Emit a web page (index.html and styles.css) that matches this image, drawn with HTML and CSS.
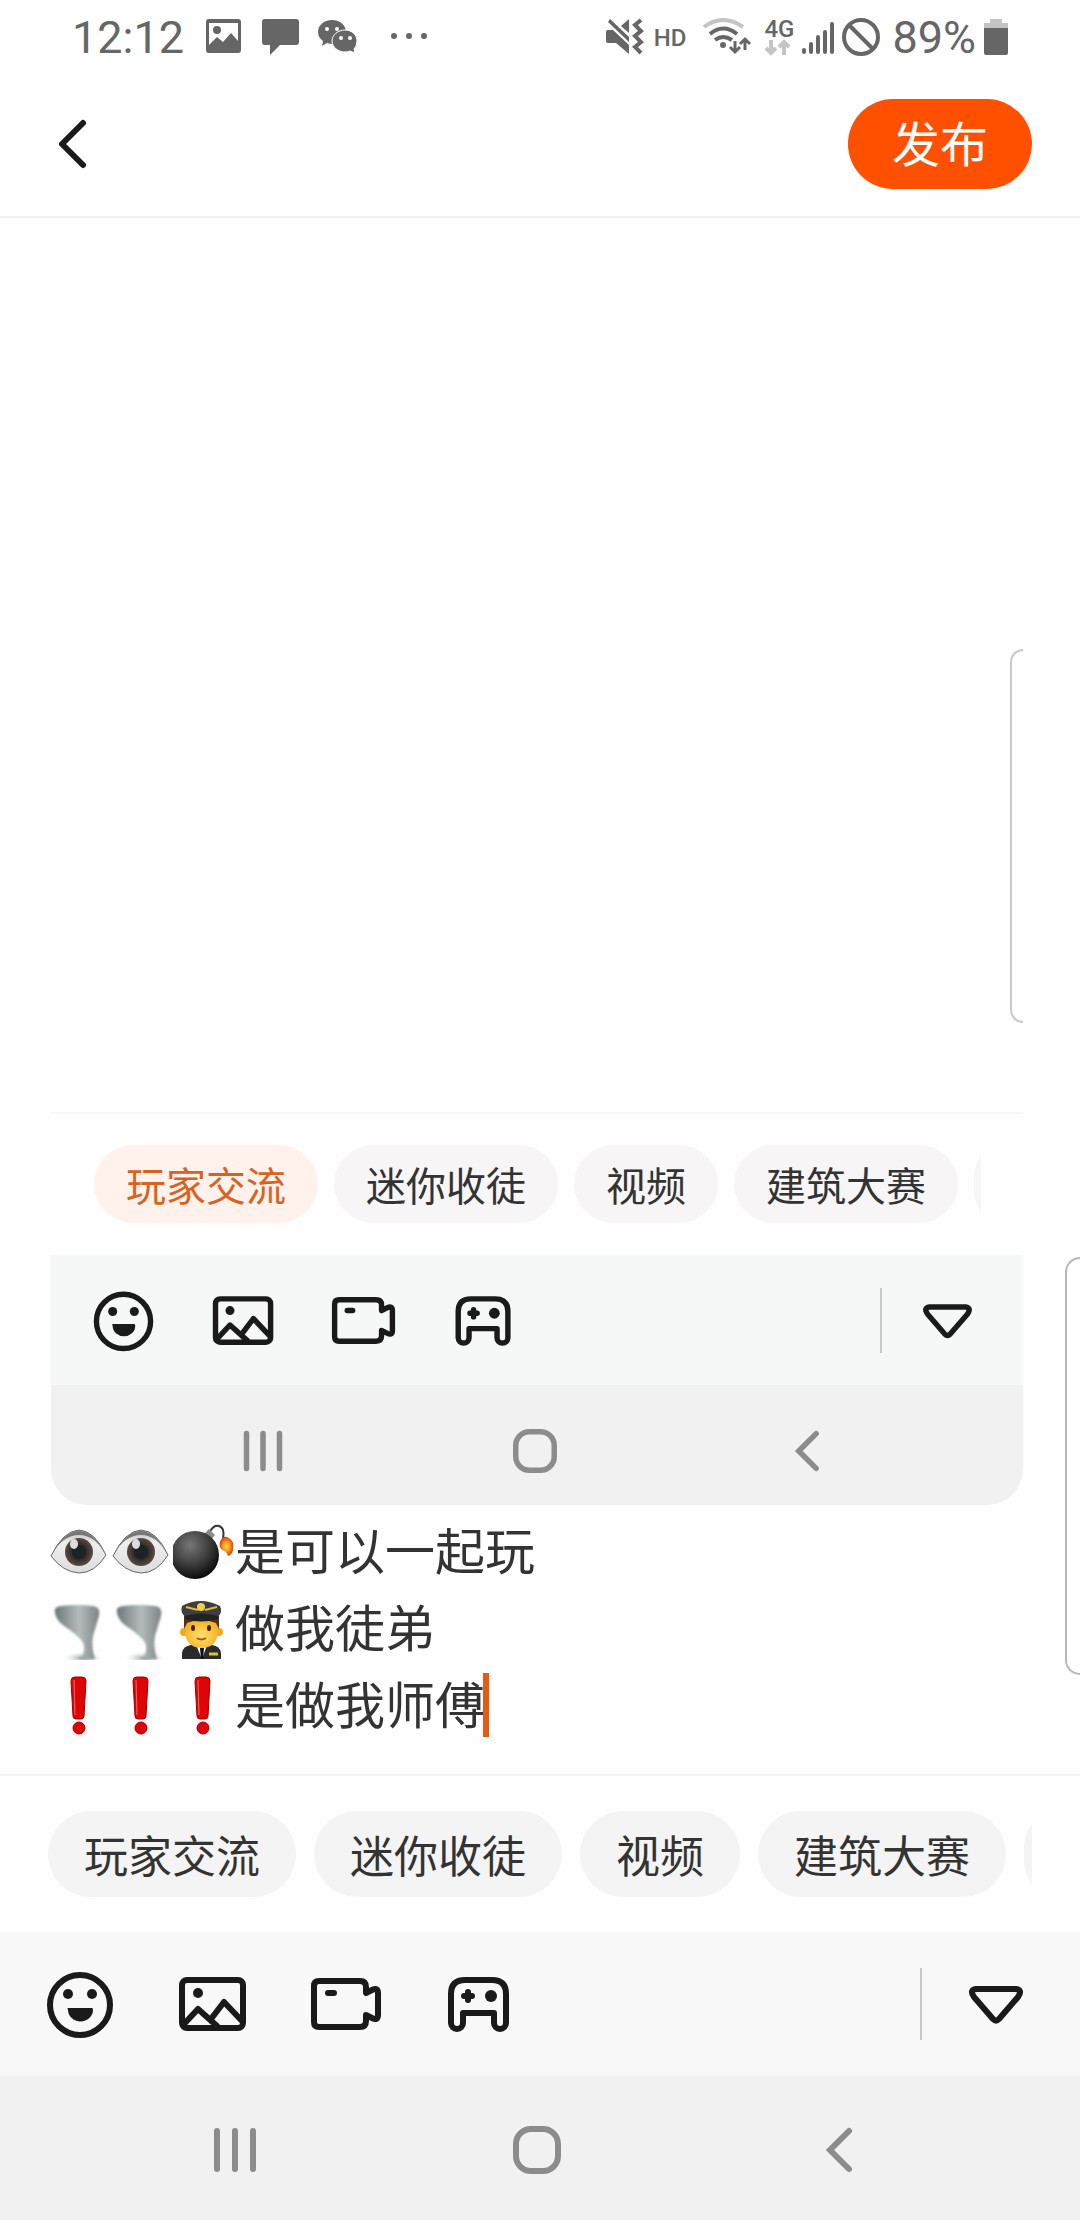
FILE: index.html
```html
<!DOCTYPE html>
<html lang="zh-CN">

<head>
    <meta charset="UTF-8">
    <meta name="viewport" content="width=device-width, initial-scale=1.0">
    <title>发布</title>
    <link rel="stylesheet" href="styles.css">
</head>

<body>
    <!-- iconos compartidos -->
    <svg class="sprite" width="0" height="0" aria-hidden="true">
        <defs>
            <radialGradient id="gBall" cx="40%" cy="30%" r="70%">
                <stop offset="0" stop-color="#777"/><stop offset=".5" stop-color="#444"/><stop offset="1" stop-color="#0c0c0c"/>
            </radialGradient>
            <radialGradient id="gIris">
                <stop offset="0" stop-color="#222a2e"/><stop offset=".5" stop-color="#2e2927"/><stop offset="1" stop-color="#5b4a43"/>
            </radialGradient>
            <linearGradient id="gEye" x1="0" y1="0" x2="0" y2="1">
                <stop offset="0" stop-color="#bbb"/><stop offset=".3" stop-color="#eee"/><stop offset="1" stop-color="#ddd"/>
            </linearGradient>
            <linearGradient id="gWind">
                <stop offset="0" stop-color="#6f7678"/><stop offset=".55" stop-color="#b4bbbd"/><stop offset="1" stop-color="#7b8385"/>
            </linearGradient>
            <radialGradient id="gDust">
                <stop offset="0" stop-color="#8a9294"/><stop offset="1" stop-color="#fff" stop-opacity="0"/>
            </radialGradient>
            <radialGradient id="gFire">
                <stop offset="0" stop-color="#ffd84a"/><stop offset=".5" stop-color="#ff9a1f"/><stop offset="1" stop-color="#d9400a"/>
            </radialGradient>
            <radialGradient id="gFace" cx="50%" cy="60%" r="60%">
                <stop offset="0" stop-color="#ffe070"/><stop offset="1" stop-color="#f5ac20"/>
            </radialGradient>
            <filter id="soft"><feGaussianBlur stdDeviation="1"/></filter>
        </defs>
        <symbol id="smile" viewBox="0 0 72 72">
            <circle cx="36" cy="37" r="30" class="line"/>
            <circle cx="24" cy="26" r="5"/><circle cx="48" cy="26" r="5"/>
            <path d="M24 40h24q1 0 1 2a12 11 0 0 1-25 0q-1-2 0-2z"/>
        </symbol>
        <symbol id="photo" viewBox="0 0 72 72">
            <rect x="5" y="12" width="61" height="48" rx="5" class="line"/>
            <circle cx="21" cy="25" r="5"/>
            <path d="M7 56L21 41L40 58M34 51L47 34L65 53" class="line"/>
        </symbol>
        <symbol id="camera" viewBox="0 0 72 72">
            <path d="M56 25V19Q56 13 50 13H9Q4 13 4 18V54Q4 59 9 59H50Q56 59 56 53V47L62 50Q68 53 68 47V25Q68 19 62 22zM18 25h6" class="line"/>
        </symbol>
        <symbol id="game" viewBox="0 0 72 72">
            <path d="M8 55V26Q8 12 22 12H49Q63 12 63 26V55A5 5 0 0 1 51 55V45H20V55A5 5 0 0 1 8 55zM21 28H29M25 24V32" class="line"/>
            <circle cx="48" cy="28" r="6"/>
        </symbol>
        <symbol id="down" viewBox="0 0 72 72">
            <path d="M16 21H56Q63 22 58 29L39 51Q36 54 33 51L14 29Q9 22 16 21z" class="line"/>
        </symbol>
        <symbol id="recents" viewBox="0 0 48 48">
            <path d="M6 5V43M24 5V43M42 5V43" class="line"/>
        </symbol>
        <symbol id="home" viewBox="0 0 48 48">
            <rect x="3" y="3" width="42" height="42" rx="15" class="line"/>
        </symbol>
        <symbol id="navback" viewBox="0 0 48 48">
            <path d="M34 5L15 24L34 43" class="line miter"/>
        </symbol>
        <symbol id="eye" viewBox="0 0 62 64">
            <path d="M2 37Q14 12 30 11Q46 12 57 36Q46 54 30 54Q14 53 2 37z" fill="url(#gEye)" stroke="#666"/>
            <path d="M3 35Q14 13 30 12Q46 13 56 35Q46 16 30 16Q14 16 3 35z" fill="#777"/>
            <circle cx="30" cy="33" r="14" fill="url(#gIris)"/>
            <circle cx="30" cy="33" r="7" fill="#1c2226"/>
            <ellipse cx="25" cy="25" rx="4" ry="5" fill="#ddd"/>
        </symbol>
        <symbol id="bomb" viewBox="0 0 62 64">
            <path d="M35 16Q40 5 46 7Q52 9 50 19" fill="none" stroke="#333" stroke-width="2"/>
            <path d="M31 15L36 10L42 16L38 21z" fill="#8b8b8b"/>
            <circle cx="22" cy="36" r="24" fill="url(#gBall)"/>
            <path d="M47 23Q49 17 54 18Q62 21 60 31Q59 36 55 37Q54 33 51 32Q45 29 47 23z" fill="url(#gFire)"/>
        </symbol>
        <symbol id="tornado" viewBox="0 0 62 64">
            <ellipse cx="34" cy="62" rx="21" ry="7" fill="url(#gDust)"/>
            <path d="M6 17Q4 11 12 10Q28 8 44 10Q52 11 50 20Q47 30 44 40Q42 50 46 63H32Q38 52 33 45Q26 37 15 30Q7 24 6 17z" fill="url(#gWind)" filter="url(#soft)"/>
        </symbol>
        <symbol id="pilot" viewBox="0 0 62 64">
            <path d="M9 63V57Q10 50 18 49H39Q47 50 48 57V63z" fill="#2b2b2e"/>
            <path d="M23 49H34L29 63z" fill="#fff"/><path d="M27 52H31L30 63H28z" fill="#111"/>
            <circle cx="11" cy="36" r="4" fill="#f2a81f"/><circle cx="46" cy="36" r="4" fill="#f2a81f"/>
            <path d="M12 22H45V36Q44 52 28 52Q13 51 12 36z" fill="url(#gFace)"/>
            <path d="M11 20H46V33L43 27Q28 21 14 27L11 33z" fill="#5b2b12"/>
            <path d="M9 10Q27 0 47 10Q50 16 45 21Q28 16 12 21Q7 16 9 10z" fill="#3c3f42"/>
            <path d="M13 11L25 14M32 14L44 11" stroke="#e2b93a" stroke-width="2"/>
            <circle cx="28" cy="11" r="4" fill="#f0cf4a"/>
            <path d="M12 20Q28 15 45 20V23Q28 28 12 23z" fill="#222"/>
            <ellipse cx="20" cy="32" rx="2" ry="3" fill="#3a2410"/><ellipse cx="36" cy="32" rx="2" ry="3" fill="#3a2410"/>
            <path d="M24 42Q28 45 33 42" fill="none" stroke="#a55a10" stroke-width="2"/>
            <path d="M36 58H45" stroke="#d8c52c" stroke-width="3"/>
        </symbol>
        <symbol id="mark" viewBox="0 0 62 64">
            <path d="M22 8Q22 4 26 4H33Q37 4 37 8L35 43Q35 46 32 46H27Q24 46 24 43z" fill="#dd0505" stroke="#a30000"/>
            <path d="M25 7L26 42" stroke="#ff6a60"/>
            <circle cx="30" cy="55" r="6" fill="#dd0505" stroke="#a30000"/>
        </symbol>
    </svg>

    <div class="status">
        <span class="time">12:12</span>
        <svg class="left-icons" width="224" height="40" viewBox="0 0 224 40" aria-hidden="true">
            <path fill-rule="evenodd" d="M3 1H32Q35 1 35 4V32Q35 35 32 35H3Q0 35 0 32V4Q0 1 3 1zM3 5V27L11 19L17 24L25 15L32 23V5z"/>
            <circle cx="11" cy="12" r="4"/>
            <path d="M59 1H90Q93 1 93 4V24Q93 27 90 27H74L64 37V27H59Q56 27 56 24V4Q56 1 59 1z"/>
            <path d="M126 2C118 2 112 7 112 14C112 18 114 21 117 23L116 28L121 25Q124 26 127 26C134 26 140 21 140 14S134 2 126 2z"/>
            <path stroke="#fff" d="M139 12C132 12 126 17 126 23S132 34 139 34Q142 34 144 33L149 35L148 31Q151 28 151 23C151 17 146 12 139 12z"/>
            <g fill="#fff"><circle cx="121" cy="11" r="2"/><circle cx="131" cy="11" r="2"/><circle cx="135" cy="20" r="2"/><circle cx="144" cy="20" r="2"/></g>
            <circle cx="188" cy="18" r="3"/><circle cx="203" cy="18" r="3"/><circle cx="218" cy="18" r="3"/>
        </svg>
        <div class="status-right">
            <svg width="38" height="40" viewBox="0 0 38 40" aria-hidden="true">
                <path d="M2 12H7L23 27V36L10 25H2Q0 25 0 23V14Q0 12 2 12zM15 8L23 1V15zM4 1L23 19V24L2 4z"/>
                <path d="M35 2L29 7L35 13L29 18L35 24L29 29L35 35" fill="none" stroke="#666" stroke-width="4"/>
            </svg>
            <span class="hd">HD</span>
            <svg width="50" height="40" viewBox="0 0 50 40" aria-hidden="true" fill="none" stroke="#666" stroke-width="4">
                <path d="M1 9Q20-5 40 9" stroke="#c4c4c4"/>
                <path d="M7 16Q20 5 34 16M12 22Q20 16 29 22"/>
                <circle cx="20" cy="27" r="3" fill="#666" stroke="none"/>
                <path d="M32 23V34M27 29L32 34L37 29M42 32V21M37 26L42 21L47 26" stroke-width="3"/>
            </svg>
            <span class="net">
                <span>4G</span>
                <svg width="28" height="18" viewBox="0 0 28 18" aria-hidden="true" fill="none" stroke="#c4c4c4" stroke-width="4">
                    <path d="M7 1V14M2 9L7 14L12 9M20 16V3M15 8L20 3L25 8"/>
                </svg>
            </span>
            <svg width="32" height="40" viewBox="0 0 32 40" aria-hidden="true" stroke="#666" stroke-width="4" stroke-linecap="round">
                <path d="M2 32V34M9 26V34M16 19V34M23 14V34M30 6V34"/>
            </svg>
            <svg width="38" height="40" viewBox="0 0 38 40" aria-hidden="true" fill="none" stroke="#666" stroke-width="4">
                <circle cx="19" cy="19" r="17"/><path d="M7 7L31 31"/>
            </svg>
            <span class="percent">89%</span>
            <svg width="24" height="40" viewBox="0 0 24 40" aria-hidden="true">
                <path d="M6 1H18V5H24V10H0V5H6z" fill="#c4c4c4"/>
                <path d="M0 10H24V35Q24 37 22 37H2Q0 37 0 35z"/>
            </svg>
        </div>
    </div>

    <header class="topbar">
        <button class="back" aria-label="返回">
            <svg width="32" height="52" viewBox="0 0 32 52"><path d="M27 5L6 26L27 47" class="line"/></svg>
        </button>
        <button class="publish">发布</button>
    </header>

    <main class="editor">
        <div class="shot">
            <span class="handle"></span>
            <div class="tags">
                <div class="tag-list">
                    <button class="tag active">玩家交流</button>
                    <button class="tag">迷你收徒</button>
                    <button class="tag">视频</button>
                    <button class="tag">建筑大赛</button>
                    <button class="tag" aria-label="更多"></button>
                </div>
            </div>
            <div class="tools">
                <button class="tool" aria-label="表情"><svg><use href="#smile"/></svg></button>
                <button class="tool" aria-label="图片"><svg><use href="#photo"/></svg></button>
                <button class="tool" aria-label="视频"><svg><use href="#camera"/></svg></button>
                <button class="tool" aria-label="游戏"><svg><use href="#game"/></svg></button>
                <span class="divider"></span>
                <button class="tool" aria-label="收起"><svg><use href="#down"/></svg></button>
            </div>
            <div class="nav">
                <button aria-label="最近"><svg><use href="#recents"/></svg></button>
                <button aria-label="主页"><svg><use href="#home"/></svg></button>
                <button aria-label="返回"><svg><use href="#navback"/></svg></button>
            </div>
        </div>
        <div class="text" contenteditable="true" role="textbox" aria-multiline="true" aria-label="正文">
            <div class="row"><svg class="emoji"><use href="#eye"/></svg><svg class="emoji"><use href="#eye"/></svg><svg class="emoji"><use href="#bomb"/></svg><span>是可以一起玩</span></div>
            <div class="row"><svg class="emoji"><use href="#tornado"/></svg><svg class="emoji"><use href="#tornado"/></svg><svg class="emoji"><use href="#pilot"/></svg><span>做我徒弟</span></div>
            <div class="row"><svg class="emoji"><use href="#mark"/></svg><svg class="emoji"><use href="#mark"/></svg><svg class="emoji"><use href="#mark"/></svg><span>是做我师傅</span><i class="caret"></i></div>
        </div>
    </main>

    <footer>
        <div class="tags">
            <div class="tag-list">
                <button class="tag">玩家交流</button>
                <button class="tag">迷你收徒</button>
                <button class="tag">视频</button>
                <button class="tag">建筑大赛</button>
                <button class="tag" aria-label="更多"></button>
            </div>
        </div>
        <div class="tools">
            <button class="tool" aria-label="表情"><svg><use href="#smile"/></svg></button>
            <button class="tool" aria-label="图片"><svg><use href="#photo"/></svg></button>
            <button class="tool" aria-label="视频"><svg><use href="#camera"/></svg></button>
            <button class="tool" aria-label="游戏"><svg><use href="#game"/></svg></button>
            <span class="divider"></span>
            <button class="tool" aria-label="收起"><svg><use href="#down"/></svg></button>
        </div>
        <div class="nav">
            <button aria-label="最近"><svg><use href="#recents"/></svg></button>
            <button aria-label="主页"><svg><use href="#home"/></svg></button>
            <button aria-label="返回"><svg><use href="#navback"/></svg></button>
        </div>
        <span class="handle"></span>
    </footer>
</body>

</html>
```
FILE: styles.css
```css
* {
    box-sizing: border-box;
}

body {
    margin: 0;
    min-height: 100vh;
    display: flex;
    flex-direction: column;
    background-color: #fefefe;
    color: #333;
    font-family: "Noto Sans CJK SC", sans-serif;
    overflow-x: hidden;
}

button {
    border: 0;
    padding: 0;
    background: none;
    color: inherit;
    font-family: inherit;
}

svg {
    display: block;
    flex: none;
}

.sprite {
    position: absolute;
}

.line {
    fill: none;
    stroke: currentColor;
    stroke-width: 6px;
    stroke-linecap: round;
    stroke-linejoin: round;
}

.miter {
    stroke-linejoin: miter;
}

/* barra de estado */
.status {
    height: 72px;
    padding: 4px 72px 0;
    display: flex;
    align-items: center;
    color: #666;
    fill: #666;
    font-family: Roboto, sans-serif;
}

.time,
.percent {
    font-size: 45px;
    line-height: 68px;
}

.left-icons {
    margin-left: 22px;
}

.status-right {
    display: flex;
    align-items: center;
    margin-left: auto;
}

.hd {
    margin: 0 17px 0 10px;
    font-size: 24px;
    font-weight: 500;
}

.net {
    margin: 0 8px 0 11px;
    font-size: 24px;
    font-weight: 500;
    line-height: 20px;
}

.percent {
    margin: 0 8px 0 12px;
}

.status-right > svg:nth-of-type(4) {
    margin-left: 8px;
}

/* cabecera */
.topbar {
    height: 146px;
    padding: 0 48px 0 56px;
    display: flex;
    align-items: center;
    justify-content: space-between;
    border-bottom: 2px solid #f1f1f1;
}

.back {
    color: #1a1a1a;
}

.publish {
    height: 90px;
    padding: 0 44px 6px;
    border-radius: 45px;
    background-color: #ff5000;
    color: white;
    font-size: 48px;
    line-height: 84px;
}

/* editor */
.editor {
    flex: 1;
    display: flex;
    flex-direction: column;
    padding: 0 57px 31px 51px;
}

.shot {
    flex: 1;
    display: flex;
    flex-direction: column;
    justify-content: flex-end;
    position: relative;
    overflow: hidden;
    border-radius: 0 0 36px 36px;
}

.text {
    margin: 7px 0 0 -2px;
    font-size: 50px;
    outline: none;
}

.row {
    display: flex;
    align-items: center;
    height: 77px;
    line-height: 70px;
    white-space: nowrap;
}

.row span {
    padding-bottom: 6px;
}

.emoji {
    width: 62px;
    height: 64px;
}

.caret {
    width: 6px;
    height: 64px;
    margin-left: -2px;
    background-color: #e65a14;
}

/* etiquetas */
.tags {
    padding: 35px 48px;
    border-top: 2px solid #f3f3f3;
}

.tag-list {
    display: flex;
    gap: 18px;
    overflow: hidden;
}

.tag {
    flex: none;
    height: 86px;
    padding: 0 36px;
    border-radius: 43px;
    background-color: #f4f4f4;
    font-size: 44px;
    line-height: 86px;
}

/* herramientas */
.tools {
    height: 144px;
    padding: 0 48px 0 44px;
    display: flex;
    align-items: center;
    gap: 61px;
    background-color: #f8f8f8;
    color: #1a1a1a;
    fill: #1a1a1a;
}

.tool svg {
    width: 72px;
    height: 72px;
}

.divider {
    width: 2px;
    height: 72px;
    margin-left: auto;
    margin-right: -23px;
    background-color: #c8c8c8;
}

/* navegacion */
.nav {
    height: 144px;
    padding: 4px 90px 0 84px;
    display: grid;
    grid-template-columns: repeat(3, 1fr);
    align-items: center;
    justify-items: center;
    background-color: #f1f1f1;
    color: #8c8c8c;
}

.nav svg {
    width: 48px;
    height: 48px;
}

/* captura dentro del editor */
.shot .tags {
    padding: 31px 42px 32px 43px;
    border-color: #f6f6f6;
}

.shot .tag-list {
    gap: 16px;
}

.shot .tag {
    height: 78px;
    padding: 0 32px;
    background-color: #f7f5f6;
    font-size: 40px;
    line-height: 78px;
}

.shot .active {
    background-color: #fff1ec;
    color: #d96220;
}

.shot .tools {
    height: 130px;
    padding: 0 43px 0 40px;
    gap: 55px;
    background-color: #f6f8f7;
}

.shot .tool svg {
    width: 65px;
    height: 65px;
}

.shot .divider {
    height: 65px;
    margin-right: -22px;
}

.shot .nav {
    height: 120px;
    padding: 12px 80px 0 76px;
}

.shot .nav svg {
    width: 44px;
    height: 44px;
}

/* borde del panel lateral */
.handle {
    position: absolute;
    right: 0;
    bottom: 545px;
    width: 15px;
    height: 418px;
    border: 2px solid #b8b8b8;
    border-right: 0;
    border-radius: 20px 0 0 20px;
}

.shot .handle {
    bottom: 482px;
    width: 13px;
    height: 374px;
    border-color: #c8c8c8;
}
```
